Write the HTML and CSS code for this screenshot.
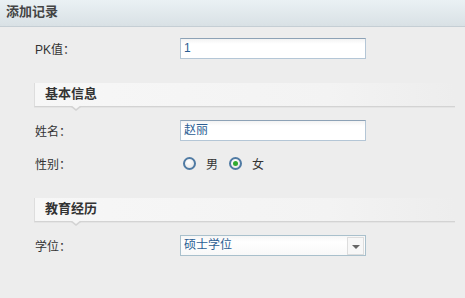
FILE: index.html
```html
<!DOCTYPE html>
<html lang="zh-CN">
<head>
    <meta charset="UTF-8">
    <title>添加记录</title>
    <link rel="stylesheet" href="styles.css">
</head>
<body>
    <div class="header">添加记录</div>

    <div class="form">
        <div class="row first">
            <div class="label">PK值：</div>
            <div class="input">1</div>
        </div>

        <div class="section">基本信息</div>

        <div class="row">
            <div class="label">姓名：</div>
            <div class="input">赵丽</div>
        </div>
        <div class="row">
            <div class="label">性别：</div>
            <div class="radios">
                <span class="radio"></span><span class="radio-text">男</span>
                <span class="radio checked"></span><span class="radio-text">女</span>
            </div>
        </div>

        <div class="section">教育经历</div>

        <div class="row">
            <div class="label">学位：</div>
            <div class="input select">硕士学位<span class="arrow"></span></div>
        </div>
    </div>
</body>
</html>
```

FILE: styles.css
```css
body {
    margin: 0;
    background-color: #EDEDED;
    color: #333333;
    font-family: "Liberation Sans", "Noto Sans CJK SC", sans-serif;
    font-size: 12px;
}
.header {
    height: 26px;
    line-height: 24px;
    padding-left: 6px;
    font-size: 13px;
    font-weight: bold;
    color: #444444;
    background: linear-gradient(to bottom, #EAF1F4, #D9E1E5);
    border-bottom: 1px solid #C5CED4;
}
.form {
    padding: 0 10px 0 35px;
}
.row {
    display: flex;
    align-items: center;
    height: 21px;
    margin-top: 12px;
}
.row.first {
    margin-top: 11px;
}
.label {
    width: 145px;
}
.input {
    position: relative;
    box-sizing: border-box;
    width: 186px;
    height: 21px;
    line-height: 19px;
    padding-left: 3px;
    color: #2B5D93;
    background: linear-gradient(to bottom, #F3F3F3, #FFFFFF 5px);
    border: 1px solid #B4C6D6;
    border-top-color: #8DA2B6;
}
.select {
    border-color: #A9C0CC;
    background: linear-gradient(to bottom, #F6F6F6, #FFFFFF 6px, #F8F8F8);
}
.arrow {
    position: absolute;
    right: 1px;
    top: 1px;
    width: 15px;
    height: 16px;
    border: 1px solid #DDDDDD;
    background: #F7F7F7;
}
.arrow::after {
    content: "";
    position: absolute;
    left: 4px;
    top: 7px;
    border-left: 4px solid transparent;
    border-right: 4px solid transparent;
    border-top: 4px solid #666666;
}
.radios {
    display: flex;
    align-items: center;
    padding-left: 3px;
}
.radio {
    box-sizing: border-box;
    width: 13px;
    height: 13px;
    border-radius: 50%;
    border: 2px solid #4F7AA3;
    background: radial-gradient(circle at 40% 35%, #FFFFFF, #E2E2E2);
    position: relative;
}
.radio.checked::after {
    content: "";
    position: absolute;
    left: 2px;
    top: 2px;
    width: 5px;
    height: 5px;
    border-radius: 50%;
    background: #2FAA2F;
}
.radio-text {
    margin: 0 11px 0 10px;
}
.section {
    position: relative;
    box-sizing: border-box;
    width: 421px;
    height: 24px;
    margin: 24px 0 0 -1px;
    padding-left: 10px;
    line-height: 22px;
    font-size: 13px;
    font-weight: bold;
    color: #333333;
    background: linear-gradient(to right, #F7F7F7, #F3F3F3 70%, #EDEDED);
    border-left: 1px solid #DDDDDD;
    border-bottom: 1px solid #D3D3D3;
    box-shadow: 0 1px 0 #E4E4E4;
}
.section::before,
.section::after {
    content: "";
    position: absolute;
    left: 36px;
    border-left: 5px solid transparent;
    border-right: 5px solid transparent;
}
.section::before {
    bottom: -5px;
    border-top: 4px solid #D3D3D3;
}
.section::after {
    bottom: -3px;
    border-top: 4px solid #F6F6F6;
}
.section + .row {
    margin-top: 13px;
}
```
